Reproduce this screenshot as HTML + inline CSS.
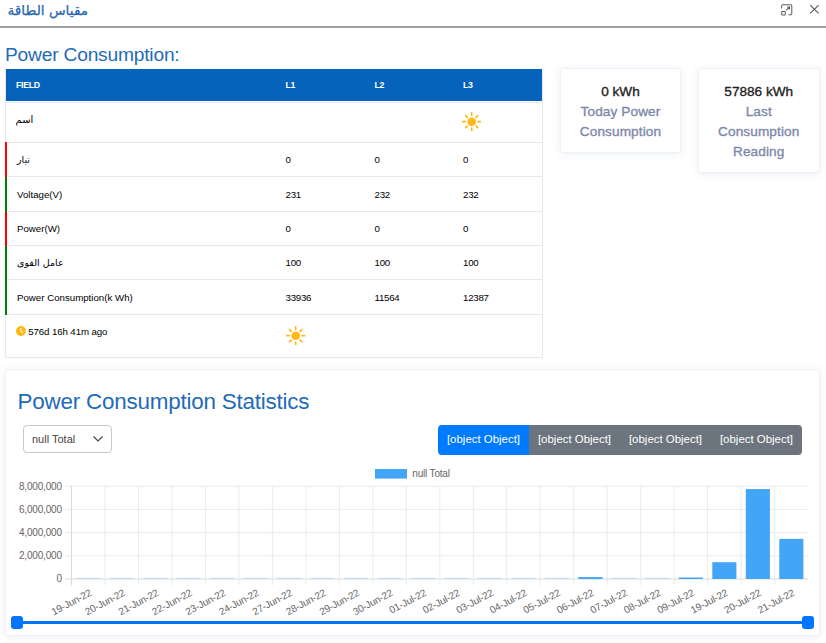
<!DOCTYPE html>
<html lang="ar"><head><meta charset="utf-8"><title>مقياس الطاقة</title>
<style>
*{box-sizing:border-box}
html,body{margin:0;padding:0}
body{width:826px;height:643px;overflow:hidden;background:#fff;position:relative;font-family:"Liberation Sans","DejaVu Sans",sans-serif;color:#000}
.abs{position:absolute}
.title{left:7.5px;top:0px;font-size:13.65px;line-height:20px;color:#2a66b3;-webkit-text-stroke:0.25px #2a66b3;white-space:nowrap;direction:rtl;font-family:"DejaVu Sans","Liberation Sans",sans-serif}
.hr{left:0;top:26px;width:826px;height:2px;background:#a0a0a0}
.h1{left:5px;top:42px;font-size:19.2px;line-height:26px;color:#1e6bb8;white-space:nowrap;letter-spacing:-0.2px}
.tb{left:5px;top:69px;width:538px;height:289px;border:1px solid #e6e8ee;border-top:none;font-size:9.7px}
.hd{left:0;top:0;width:536px;height:32px;background:#0563bb;color:#fff;font-weight:bold;font-size:8.8px;letter-spacing:-0.3px}
.hd .c{padding-top:0.5px}
.hd .c0{left:10px}
.row{left:0;width:536px;border-top:1px solid #e6e8ee}
.row.r::before,.row.g::before{content:"";position:absolute;left:-1px;top:0;bottom:-1px;width:2px;background:#f00;z-index:2}
.row.g::before{background:#008000}
.row.first::before{top:-1px}
.c{position:absolute;top:0;bottom:0;display:flex;align-items:center;white-space:nowrap}
.c0{left:11px}.c1{left:279.5px}.c2{left:368.5px}.c3{left:457px}
.c .sun{margin-left:-1px}
.c1,.c2,.c3{letter-spacing:-0.25px}
.ar{font-family:"DejaVu Sans","Liberation Sans",sans-serif;font-size:9.5px}
.clk{display:inline-block;margin-right:2.6px;position:relative;top:-0.6px}
.sun{display:block}
.card{background:#fff;border:1px solid #f0f1f7;border-radius:3px;box-shadow:0 1px 8px rgba(110,120,170,0.12)}
.kpi{text-align:center;font-size:13.6px;line-height:20.3px;font-weight:normal;color:#7d89aa;padding-top:12.5px;-webkit-text-stroke:0.35px #7d89aa}
.kpi{letter-spacing:0.12px}
.kpi b{letter-spacing:0;color:#222;display:block;font-weight:normal;-webkit-text-stroke:0.35px #222}
.h2{left:17.5px;top:387px;font-size:22.4px;line-height:30px;color:#1e6bb8;white-space:nowrap;letter-spacing:-0.2px}
.sel{left:23px;top:425px;width:89px;height:28px;border:1px solid #c8c8c8;border-radius:4px;background:#fff;font-size:11px;line-height:26px;padding-left:8px;color:#444}
.btns{left:438px;top:425.3px;width:364px;height:29.6px;display:flex;border-radius:4px;overflow:hidden}
.btns div{flex:1;background:#6c757d;color:#fff;font-size:11.45px;line-height:29.8px;text-align:center;white-space:nowrap}
.btns div.on{background:#007bff}
.chart{position:absolute;left:0;top:460px}
.track{left:17px;top:621px;width:791px;height:3.2px;background:#0075ff;border-radius:2px}
.thumb{width:12.6px;height:12.6px;background:#0075ff;border-radius:3px;top:616.2px}
</style></head><body>
<div class="abs title">مقياس الطاقة</div>
<svg class="abs" style="left:779.8px;top:2.8px" width="14.6" height="14.6" viewBox="0 0 13 13" fill="none" stroke="#5c5c5c" stroke-width="0.9"><path d="M1.5 5V2.5a1 1 0 0 1 1-1h7a1 1 0 0 1 1 1v7a1 1 0 0 1-1 1H7.5"/><rect x="1.5" y="7.5" width="3.2" height="3.2" rx="0.6"/><path d="M5.5 6.5l3-3M6.3 3.5h2.2v2.2"/></svg>
<svg class="abs" style="left:809px;top:4px" width="11" height="11" viewBox="0 0 11 11" fill="none" stroke="#555" stroke-width="1.05"><path d="M1.2 1.2l8.4 8.2M9.6 1.2l-8.4 8.2"/></svg>
<div class="abs hr"></div>
<div class="abs h1">Power Consumption:</div>
<div class="abs tb">
<div class="abs hd"><div class="c c0">FIELD</div><div class="c c1">L1</div><div class="c c2">L2</div><div class="c c3">L3</div></div>
<div class="abs row " style="top:32.7px;height:40.3px"><div class="c c0" style="left:9.5px;padding-bottom:5.5px"><span class="ar" style="font-size:10px">اسم</span></div><div class="c c3" style="padding-bottom:1.8px"><svg class="sun" width="19.4" height="19.4" viewBox="0 0 19.4 19.4"><g stroke="#fdb813" stroke-width="1.65" stroke-linecap="round"><line x1="16.00" y1="9.70" x2="18.60" y2="9.70"/><line x1="14.08" y1="14.08" x2="15.71" y2="15.71"/><line x1="9.70" y1="16.00" x2="9.70" y2="18.60"/><line x1="5.32" y1="14.08" x2="3.69" y2="15.71"/><line x1="3.40" y1="9.70" x2="0.80" y2="9.70"/><line x1="5.32" y1="5.32" x2="3.69" y2="3.69"/><line x1="9.70" y1="3.40" x2="9.70" y2="0.80"/><line x1="14.08" y1="5.32" x2="15.71" y2="3.69"/></g><circle cx="9.7" cy="9.7" r="4.3" fill="#fdb813"/></svg></div></div>
<div class="abs row r first" style="top:73px;height:34px"><div class="c c0"><span class="ar">تيار</span></div><div class="c c1">0</div><div class="c c2">0</div><div class="c c3">0</div></div>
<div class="abs row g" style="top:107px;height:35px"><div class="c c0">Voltage(V)</div><div class="c c1">231</div><div class="c c2">232</div><div class="c c3">232</div></div>
<div class="abs row r" style="top:142px;height:34px"><div class="c c0">Power(W)</div><div class="c c1">0</div><div class="c c2">0</div><div class="c c3">0</div></div>
<div class="abs row g" style="top:176px;height:34px"><div class="c c0"><span class="ar">عامل القوى</span></div><div class="c c1">100</div><div class="c c2">100</div><div class="c c3">100</div></div>
<div class="abs row g" style="top:210px;height:35px"><div class="c c0">Power Consumption(k Wh)</div><div class="c c1">33936</div><div class="c c2">11564</div><div class="c c3">12387</div></div>
<div class="abs row " style="top:245px;height:43px"><div class="c c0" style="left:9.7px;padding-bottom:9.6px;letter-spacing:-0.1px"><svg class="clk" width="9.9" height="9.9" viewBox="0 0 10 10"><circle cx="5" cy="5" r="5" fill="#fdb813"/><path d="M4.9 2.4V5.2L6.7 6.5" fill="none" stroke="#fff" stroke-width="1.1" stroke-linecap="round" stroke-linejoin="round"/></svg>576d 16h 41m ago</div><div class="c c1" style="left:281.2px;padding-bottom:1.2px"><svg class="sun" width="19.4" height="19.4" viewBox="0 0 19.4 19.4"><g stroke="#fdb813" stroke-width="1.65" stroke-linecap="round"><line x1="16.00" y1="9.70" x2="18.60" y2="9.70"/><line x1="14.08" y1="14.08" x2="15.71" y2="15.71"/><line x1="9.70" y1="16.00" x2="9.70" y2="18.60"/><line x1="5.32" y1="14.08" x2="3.69" y2="15.71"/><line x1="3.40" y1="9.70" x2="0.80" y2="9.70"/><line x1="5.32" y1="5.32" x2="3.69" y2="3.69"/><line x1="9.70" y1="3.40" x2="9.70" y2="0.80"/><line x1="14.08" y1="5.32" x2="15.71" y2="3.69"/></g><circle cx="9.7" cy="9.7" r="4.3" fill="#fdb813"/></svg></div></div>
</div>
<div class="abs card kpi" style="left:560px;top:68px;width:121px;height:85px"><b>0 kWh</b>Today Power<br>Consumption</div>
<div class="abs card kpi" style="left:698px;top:68px;width:121.5px;height:104.5px"><b>57886 kWh</b>Last<br>Consumption<br>Reading</div>
<div class="abs card" style="left:5px;top:369px;width:815px;height:267px"></div>
<div class="abs h2">Power Consumption Statistics</div>
<div class="abs sel">null Total<svg class="abs" style="left:68px;top:9px" width="12" height="8" viewBox="0 0 12 8" fill="none" stroke="#444" stroke-width="1.1"><path d="M1.5 1.5l4.5 4.5 4.5-4.5"/></svg></div>
<div class="abs btns"><div class="on">[object Object]</div><div>[object Object]</div><div>[object Object]</div><div>[object Object]</div></div>
<svg class="chart" width="826" height="180" viewBox="0 460 826 180" font-family="Liberation Sans, Arial, sans-serif" font-size="10" letter-spacing="-0.18">
<rect x="375" y="469" width="32" height="9.6" fill="#42a5f5"/>
<text x="412.3" y="476.6" fill="#666">null Total</text>
<line x1="65.1" y1="579.0" x2="808.1" y2="579.0" stroke="#d0d0d0" stroke-width="0.8"/>
<text x="61.8" y="582.4" text-anchor="end" fill="#666">0</text>
<line x1="65.1" y1="555.8" x2="808.1" y2="555.8" stroke="#e6e6e6" stroke-width="0.8"/>
<text x="61.8" y="559.2" text-anchor="end" fill="#666">2,000,000</text>
<line x1="65.1" y1="532.6" x2="808.1" y2="532.6" stroke="#e6e6e6" stroke-width="0.8"/>
<text x="61.8" y="536.0" text-anchor="end" fill="#666">4,000,000</text>
<line x1="65.1" y1="509.4" x2="808.1" y2="509.4" stroke="#e6e6e6" stroke-width="0.8"/>
<text x="61.8" y="512.8" text-anchor="end" fill="#666">6,000,000</text>
<line x1="65.1" y1="486.2" x2="808.1" y2="486.2" stroke="#e6e6e6" stroke-width="0.8"/>
<text x="61.8" y="489.6" text-anchor="end" fill="#666">8,000,000</text>
<line x1="71.5" y1="486.2" x2="71.5" y2="585.4" stroke="#d0d0d0" stroke-width="0.8"/>
<line x1="105.0" y1="486.2" x2="105.0" y2="585.4" stroke="#e6e6e6" stroke-width="0.8"/>
<line x1="138.5" y1="486.2" x2="138.5" y2="585.4" stroke="#e6e6e6" stroke-width="0.8"/>
<line x1="171.9" y1="486.2" x2="171.9" y2="585.4" stroke="#e6e6e6" stroke-width="0.8"/>
<line x1="205.4" y1="486.2" x2="205.4" y2="585.4" stroke="#e6e6e6" stroke-width="0.8"/>
<line x1="238.9" y1="486.2" x2="238.9" y2="585.4" stroke="#e6e6e6" stroke-width="0.8"/>
<line x1="272.4" y1="486.2" x2="272.4" y2="585.4" stroke="#e6e6e6" stroke-width="0.8"/>
<line x1="305.9" y1="486.2" x2="305.9" y2="585.4" stroke="#e6e6e6" stroke-width="0.8"/>
<line x1="339.3" y1="486.2" x2="339.3" y2="585.4" stroke="#e6e6e6" stroke-width="0.8"/>
<line x1="372.8" y1="486.2" x2="372.8" y2="585.4" stroke="#e6e6e6" stroke-width="0.8"/>
<line x1="406.3" y1="486.2" x2="406.3" y2="585.4" stroke="#e6e6e6" stroke-width="0.8"/>
<line x1="439.8" y1="486.2" x2="439.8" y2="585.4" stroke="#e6e6e6" stroke-width="0.8"/>
<line x1="473.3" y1="486.2" x2="473.3" y2="585.4" stroke="#e6e6e6" stroke-width="0.8"/>
<line x1="506.7" y1="486.2" x2="506.7" y2="585.4" stroke="#e6e6e6" stroke-width="0.8"/>
<line x1="540.2" y1="486.2" x2="540.2" y2="585.4" stroke="#e6e6e6" stroke-width="0.8"/>
<line x1="573.7" y1="486.2" x2="573.7" y2="585.4" stroke="#e6e6e6" stroke-width="0.8"/>
<line x1="607.2" y1="486.2" x2="607.2" y2="585.4" stroke="#e6e6e6" stroke-width="0.8"/>
<line x1="640.7" y1="486.2" x2="640.7" y2="585.4" stroke="#e6e6e6" stroke-width="0.8"/>
<line x1="674.1" y1="486.2" x2="674.1" y2="585.4" stroke="#e6e6e6" stroke-width="0.8"/>
<line x1="707.6" y1="486.2" x2="707.6" y2="585.4" stroke="#e6e6e6" stroke-width="0.8"/>
<line x1="741.1" y1="486.2" x2="741.1" y2="585.4" stroke="#e6e6e6" stroke-width="0.8"/>
<line x1="774.6" y1="486.2" x2="774.6" y2="585.4" stroke="#e6e6e6" stroke-width="0.8"/>
<rect x="76.2" y="577.8" width="24.1" height="1" fill="#42a5f5" opacity="0.3"/>
<text transform="translate(92.2,595.0) rotate(-28)" text-anchor="end" fill="#666">19-Jun-22</text>
<rect x="109.7" y="577.8" width="24.1" height="1" fill="#42a5f5" opacity="0.3"/>
<text transform="translate(125.7,595.0) rotate(-28)" text-anchor="end" fill="#666">20-Jun-22</text>
<rect x="143.1" y="577.8" width="24.1" height="1" fill="#42a5f5" opacity="0.3"/>
<text transform="translate(159.2,595.0) rotate(-28)" text-anchor="end" fill="#666">21-Jun-22</text>
<rect x="176.6" y="577.8" width="24.1" height="1" fill="#42a5f5" opacity="0.3"/>
<text transform="translate(192.7,595.0) rotate(-28)" text-anchor="end" fill="#666">22-Jun-22</text>
<rect x="210.1" y="577.8" width="24.1" height="1" fill="#42a5f5" opacity="0.3"/>
<text transform="translate(226.2,595.0) rotate(-28)" text-anchor="end" fill="#666">23-Jun-22</text>
<rect x="243.6" y="577.8" width="24.1" height="1" fill="#42a5f5" opacity="0.3"/>
<text transform="translate(259.6,595.0) rotate(-28)" text-anchor="end" fill="#666">24-Jun-22</text>
<rect x="277.1" y="577.8" width="24.1" height="1" fill="#42a5f5" opacity="0.3"/>
<text transform="translate(293.1,595.0) rotate(-28)" text-anchor="end" fill="#666">27-Jun-22</text>
<rect x="310.5" y="577.8" width="24.1" height="1" fill="#42a5f5" opacity="0.3"/>
<text transform="translate(326.6,595.0) rotate(-28)" text-anchor="end" fill="#666">28-Jun-22</text>
<rect x="344.0" y="577.8" width="24.1" height="1" fill="#42a5f5" opacity="0.3"/>
<text transform="translate(360.1,595.0) rotate(-28)" text-anchor="end" fill="#666">29-Jun-22</text>
<rect x="377.5" y="577.8" width="24.1" height="1" fill="#42a5f5" opacity="0.3"/>
<text transform="translate(393.6,595.0) rotate(-28)" text-anchor="end" fill="#666">30-Jun-22</text>
<rect x="411.0" y="577.8" width="24.1" height="1" fill="#42a5f5" opacity="0.3"/>
<text transform="translate(427.0,595.0) rotate(-28)" text-anchor="end" fill="#666">01-Jul-22</text>
<rect x="444.5" y="577.8" width="24.1" height="1" fill="#42a5f5" opacity="0.3"/>
<text transform="translate(460.5,595.0) rotate(-28)" text-anchor="end" fill="#666">02-Jul-22</text>
<rect x="477.9" y="577.8" width="24.1" height="1" fill="#42a5f5" opacity="0.3"/>
<text transform="translate(494.0,595.0) rotate(-28)" text-anchor="end" fill="#666">03-Jul-22</text>
<rect x="511.4" y="577.8" width="24.1" height="1" fill="#42a5f5" opacity="0.3"/>
<text transform="translate(527.5,595.0) rotate(-28)" text-anchor="end" fill="#666">04-Jul-22</text>
<rect x="544.9" y="577.8" width="24.1" height="1" fill="#42a5f5" opacity="0.3"/>
<text transform="translate(561.0,595.0) rotate(-28)" text-anchor="end" fill="#666">05-Jul-22</text>
<rect x="578.4" y="577.1" width="24.1" height="1.9" fill="#42a5f5"/>
<text transform="translate(594.4,595.0) rotate(-28)" text-anchor="end" fill="#666">06-Jul-22</text>
<rect x="611.9" y="577.8" width="24.1" height="1" fill="#42a5f5" opacity="0.3"/>
<text transform="translate(627.9,595.0) rotate(-28)" text-anchor="end" fill="#666">07-Jul-22</text>
<rect x="645.3" y="577.8" width="24.1" height="1" fill="#42a5f5" opacity="0.3"/>
<text transform="translate(661.4,595.0) rotate(-28)" text-anchor="end" fill="#666">08-Jul-22</text>
<rect x="678.8" y="577.5" width="24.1" height="1.5" fill="#42a5f5"/>
<text transform="translate(694.9,595.0) rotate(-28)" text-anchor="end" fill="#666">09-Jul-22</text>
<rect x="712.3" y="562.2" width="24.1" height="16.8" fill="#42a5f5"/>
<text transform="translate(728.4,595.0) rotate(-28)" text-anchor="end" fill="#666">19-Jul-22</text>
<rect x="745.8" y="489.1" width="24.1" height="89.9" fill="#42a5f5"/>
<text transform="translate(761.8,595.0) rotate(-28)" text-anchor="end" fill="#666">20-Jul-22</text>
<rect x="779.3" y="538.9" width="24.1" height="40.1" fill="#42a5f5"/>
<text transform="translate(795.3,595.0) rotate(-28)" text-anchor="end" fill="#666">21-Jul-22</text>
</svg>
<div class="abs track"></div>
<div class="abs thumb" style="left:10.8px"></div>
<div class="abs thumb" style="left:801.6px"></div>
</body></html>
